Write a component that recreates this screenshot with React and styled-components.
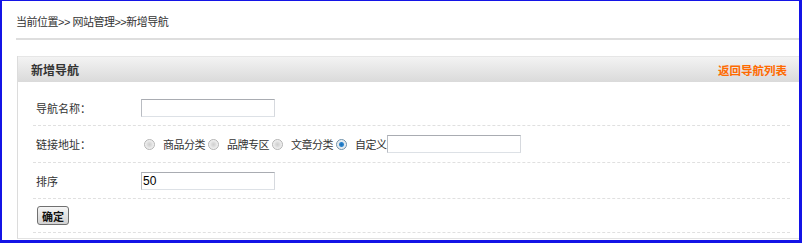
import React from "react";
import styled, { createGlobalStyle } from "styled-components";

const GlobalStyle = createGlobalStyle`
  html, body {
    margin: 0;
    padding: 0;
    background: #ffffff;
  }
  body {
    font-family: "Liberation Sans", "Noto Sans CJK SC", sans-serif;
    font-size: 11px;
    color: #333;
  }
`;

const App = () => {
  return (
    <Frame>
      <GlobalStyle />
      <Breadcrumb>当前位置&gt;&gt; 网站管理&gt;&gt;新增导航</Breadcrumb>
      <Panel>
        <PanelHeader>
          <PanelTitle>新增导航</PanelTitle>
          <BackLink href="#">返回导航列表</BackLink>
        </PanelHeader>
        <PanelBody>
          <Row>
            <Label>导航名称：</Label>
            <TextInput defaultValue="" />
          </Row>
          <Row $tall>
            <Label>链接地址：</Label>
            <Radio />
            <RadioText>商品分类</RadioText>
            <Radio />
            <RadioText>品牌专区</RadioText>
            <Radio />
            <RadioText>文章分类</RadioText>
            <Radio $checked />
            <RadioText>自定义</RadioText>
            <TextInput defaultValue="" />
          </Row>
          <Row>
            <Label>排序</Label>
            <TextInput defaultValue="50" />
          </Row>
          <Row $short>
            <Button>确定</Button>
          </Row>
        </PanelBody>
      </Panel>
    </Frame>
  );
};

const Frame = styled.div`
  box-sizing: border-box;
  width: 802px;
  height: 243px;
  overflow: hidden;
  border-style: solid;
  border-color: #1414e6;
  border-width: 1px 3px 3px 2px;
  display: flex;
  flex-direction: column;
`;

const Breadcrumb = styled.div`
  margin-left: 14px;
  padding: 14px 0 9px 0;
  line-height: 14px;
  color: #333;
  letter-spacing: -0.5px;
  border-bottom: 2px solid #dedede;
`;

const Panel = styled.div`
  margin: 16px 0 0 15px;
  border-left: 1px solid #dcdcdc;
  border-bottom: 1px solid #e2e2e2;
  display: flex;
  flex-direction: column;
`;

const PanelHeader = styled.div`
  height: 25px;
  border-top: 1px solid #e6e6e6;
  background: linear-gradient(to bottom, #f3f3f3, #dadada);
  display: flex;
  align-items: center;
  justify-content: space-between;
  padding: 0 12px 0 13px;
`;

const PanelTitle = styled.span`
  font-weight: bold;
  font-size: 12px;
  color: #333;
`;

const BackLink = styled.a`
  font-weight: bold;
  font-size: 11.5px;
  color: #ff6a00;
  text-decoration: none;
`;

const PanelBody = styled.div`
  padding: 8px 9px 5px 15px;
  display: flex;
  flex-direction: column;
`;

const Row = styled.div`
  height: ${(p) => (p.$tall ? 36 : p.$short ? 33 : 35)}px;
  border-bottom: 1px dashed #e0e0e0;
  display: flex;
  align-items: center;
`;

const Label = styled.span`
  box-sizing: border-box;
  width: 108px;
  padding-left: 3px;
  color: #333;
`;

const TextInput = styled.input`
  box-sizing: border-box;
  width: 134px;
  height: 18px;
  margin: 0;
  padding: 0 1px;
  border: 1px solid;
  border-color: #a9acb2 #d6d9de #dde1e6 #b9bcc2;
  font-family: "Liberation Sans", sans-serif;
  font-size: 12px;
  color: #000;
  outline: none;
`;

const Radio = styled.span`
  box-sizing: border-box;
  width: 11px;
  height: 11px;
  margin: 0 8px 0 3px;
  border-radius: 50%;
  border: 1px solid ${(p) => (p.$checked ? "#6e8fa8" : "#b4b4b4")};
  background: ${(p) =>
    p.$checked
      ? "radial-gradient(circle, #1a6fb8 0, #2d86cf 2px, #dfe8ef 3px, #f3f5f7 5px)"
      : "radial-gradient(circle, #cfcfcf 0, #dcdcdc 2px, #eeeeee 4px, #f8f8f8 5px)"};
`;

const RadioText = styled.span`
  color: #333;
  letter-spacing: -0.5px;
  white-space: nowrap;
`;

const Button = styled.button`
  box-sizing: border-box;
  width: 32px;
  height: 19px;
  margin: 0 0 0 4px;
  padding: 0;
  border: 1px solid #707070;
  border-radius: 3px;
  background: linear-gradient(to bottom, #f6f6f6, #e3e3e3 50%, #d2d2d2);
  font-family: "Noto Sans CJK SC", sans-serif;
  font-size: 11px;
  font-weight: bold;
  color: #111;
`;

export default App;
